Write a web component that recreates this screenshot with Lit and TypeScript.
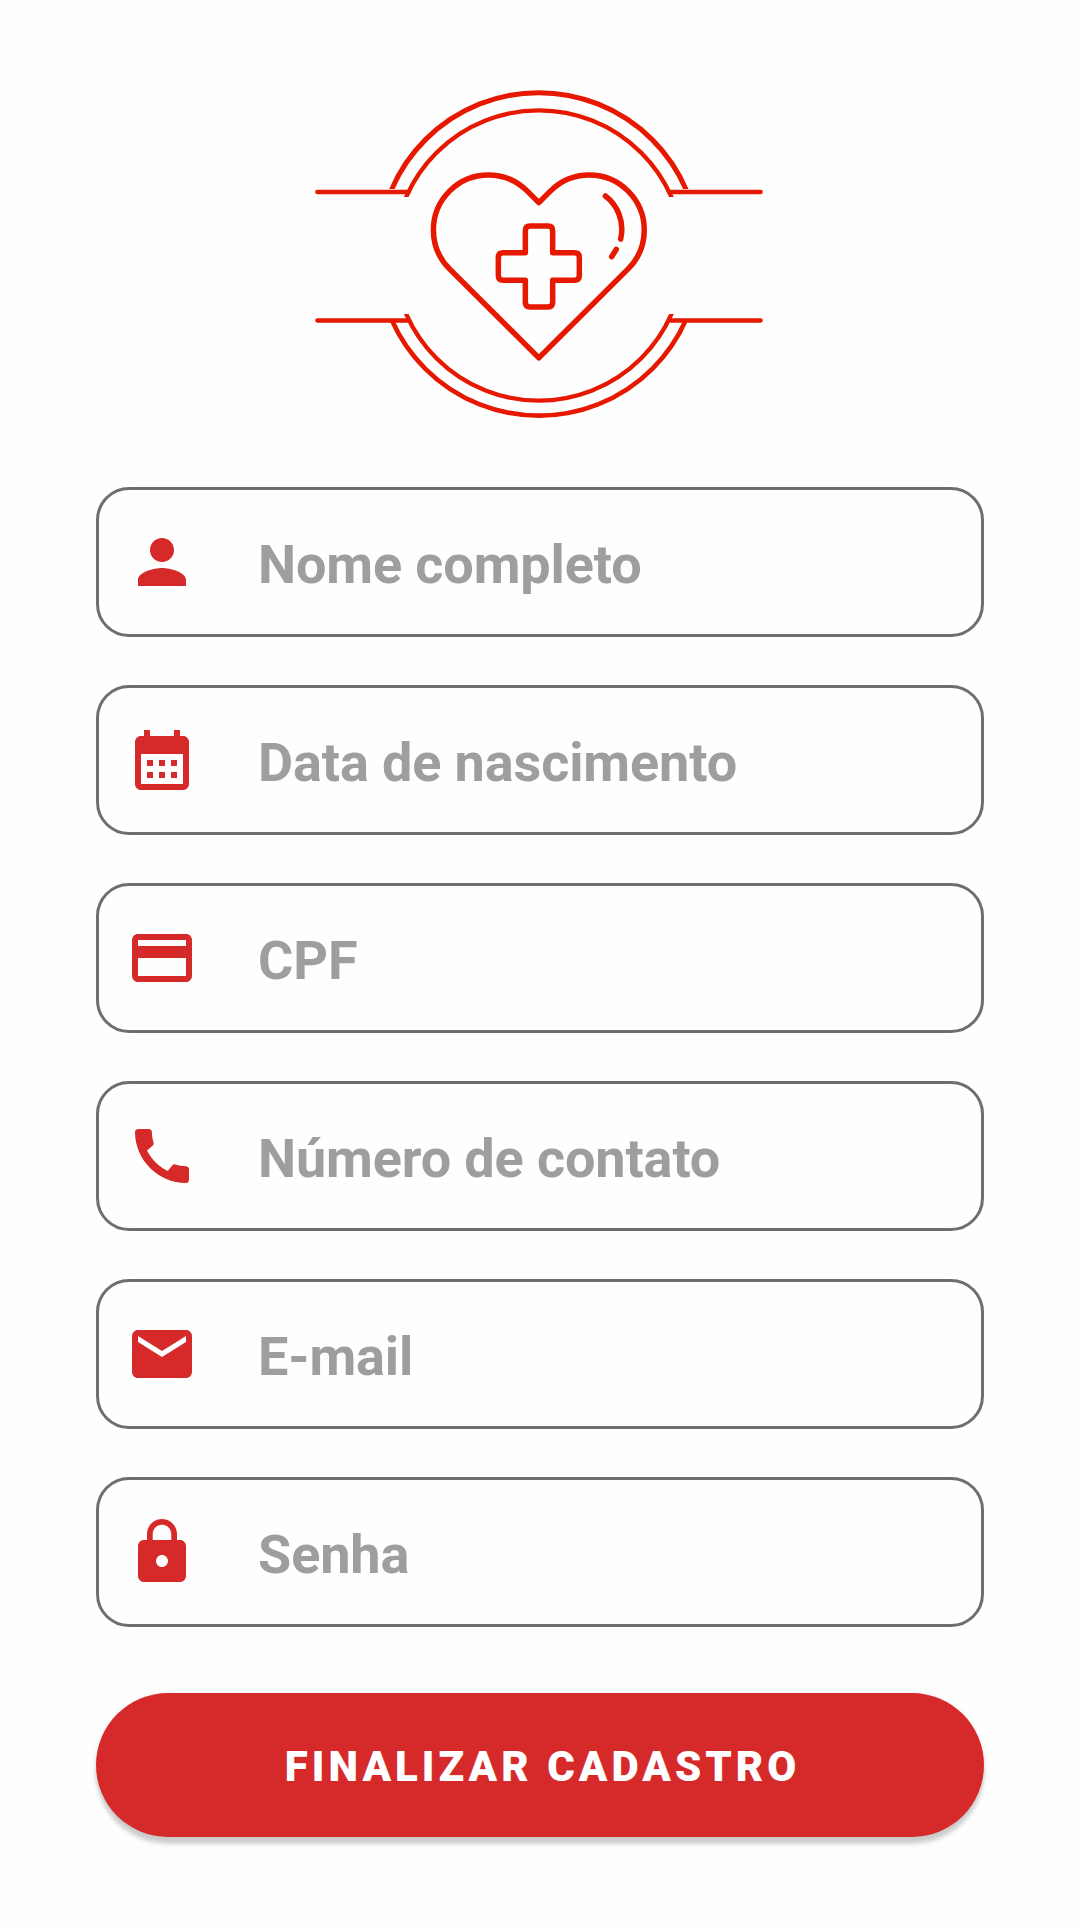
import { LitElement, html, css, svg, SVGTemplateResult } from "lit";
import { customElement, property } from "lit/decorators.js";

const icons: Record<string, SVGTemplateResult> = {
  person: svg`<path d="M12 12c2.21 0 4-1.79 4-4s-1.79-4-4-4-4 1.79-4 4 1.79 4 4 4zm0 2c-2.67 0-8 1.34-8 4v2h16v-2c0-2.66-5.33-4-8-4z"/>`,
  calendar: svg`<path fill-rule="evenodd" d="M19 4h-1V2h-2v2H8V2H6v2H5c-1.11 0-1.99.9-1.99 2L3 20c0 1.1.89 2 2 2h14c1.1 0 2-.9 2-2V6c0-1.1-.9-2-2-2zm0 16H5V10h14v10zM9 14H7v-2h2v2zm4 0h-2v-2h2v2zm4 0h-2v-2h2v2zm-8 4H7v-2h2v2zm4 0h-2v-2h2v2zm4 0h-2v-2h2v2z"/>`,
  card: svg`<path d="M20 4H4c-1.11 0-1.99.89-1.99 2L2 18c0 1.11.89 2 2 2h16c1.11 0 2-.89 2-2V6c0-1.11-.89-2-2-2zm0 14H4v-6h16v6zm0-10H4V6h16v2z"/>`,
  phone: svg`<path d="M20.01 15.38c-1.23 0-2.42-.2-3.53-.56-.35-.12-.74-.03-1.01.24l-1.57 1.97c-2.83-1.35-5.48-3.9-6.89-6.83l1.95-1.66c.27-.28.35-.67.24-1.02-.37-1.11-.56-2.3-.56-3.53 0-.54-.45-.99-.99-.99H4.19C3.65 3 3 3.24 3 3.99 3 13.28 10.73 21 20.01 21c.71 0 .99-.63.99-1.18v-3.45c0-.54-.45-.99-.99-.99z"/>`,
  mail: svg`<path d="M20 4H4c-1.1 0-1.99.9-1.99 2L2 18c0 1.1.9 2 2 2h16c1.1 0 2-.9 2-2V6c0-1.1-.9-2-2-2zm0 4l-8 5-8-5V6l8 5 8-5v2z"/>`,
  lock: svg`<path d="M18 8h-1V6c0-2.76-2.24-5-5-5S7 3.24 7 6v2H6c-1.1 0-2 .9-2 2v10c0 1.1.9 2 2 2h12c1.1 0 2-.9 2-2V10c0-1.1-.9-2-2-2zm-6 9c-1.1 0-2-.9-2-2s.9-2 2-2 2 .9 2 2-.9 2-2 2zm3.1-9H8.9V6c0-1.71 1.39-3.1 3.1-3.1 1.71 0 3.1 1.39 3.1 3.1v2z"/>`,
};

@customElement("brand-logo")
export class BrandLogo extends LitElement {
  static styles = css`
    :host { display: block; }
    .logo { display: block; width: 480px; height: 360px; fill: none; stroke: #e61800; }
  `;

  render() {
    return html`
      <svg class="logo" viewBox="0 0 1440 1080" aria-hidden="true">
        <defs>
          <clipPath id="outer-top"><rect x="0" y="0" width="1440" height="357" /></clipPath>
          <clipPath id="inner-top"><rect x="0" y="0" width="1440" height="381" /></clipPath>
          <clipPath id="outer-bottom"><rect x="0" y="751" width="1440" height="329" /></clipPath>
          <clipPath id="inner-bottom"><rect x="0" y="732" width="1440" height="348" /></clipPath>
        </defs>
        <circle cx="716.5" cy="549" r="481" stroke-width="15" clip-path="url(#outer-top)" />
        <circle cx="716.5" cy="555.5" r="434.5" stroke-width="13" clip-path="url(#inner-top)" />
        <circle cx="716.5" cy="554.5" r="482.5" stroke-width="14" clip-path="url(#outer-bottom)" />
        <circle cx="716.5" cy="557.5" r="434.5" stroke-width="13" clip-path="url(#inner-bottom)" />
        <path stroke-width="13" stroke-linecap="round" d="M52 366H326M1112 366H1382M52 751.500H324M1112 751.500H1382" />
        <g stroke-width="16.5" stroke-linecap="round" stroke-linejoin="round">
          <path d="M716.5 398L682 363.5A165 165 0 1 0 448.500 596.700L716.500 863.500L984.500 596.700A165 165 0 1 0 751 363.500Z" />
          <path d="M690 468H744Q758 468 758 482V548H824Q838 548 838 562V616.500Q838 630.500 824 630.500H758V697Q758 711 744 711H690Q676 711 676 697V630.500H609Q595 630.500 595 616.500V562Q595 548 609 548H676V482Q676 468 690 468Z" />
          <path d="M916 378C953 405 974 456 962 507M949 538L935 560" />
        </g>
      </svg>
    `;
  }
}

@customElement("form-field")
export class FormField extends LitElement {
  @property() icon = "person";
  @property() label = "";

  static styles = css`
    :host { display: block; }
    .field {
      box-sizing: border-box;
      display: flex;
      align-items: center;
      gap: 60px;
      height: 150px;
      padding: 0 27px;
      border: 3px solid #6e6e6e;
      border-radius: 33px;
    }
    .icon { flex: none; width: 72px; height: 72px; fill: #d62a2a; }
    .input {
      flex: 1;
      min-width: 0;
      height: 72px;
      padding: 5px 0 0;
      border: 0;
      outline: 0;
      background: transparent;
      color: #212121;
      font: 700 54px/72px Roboto, "Liberation Sans", sans-serif;
      letter-spacing: -0.12px;
    }
    .input::placeholder { color: #9e9e9e; opacity: 1; }
  `;

  render() {
    return html`
      <label class="field">
        <svg class="icon" viewBox="0 0 24 24" aria-hidden="true">${icons[this.icon]}</svg>
        <input class="input" placeholder=${this.label} aria-label=${this.label} />
      </label>
    `;
  }
}

@customElement("app-root")
export class AppRoot extends LitElement {
  static styles = css`
    :host { display: block; }
    .page {
      box-sizing: border-box;
      display: flex;
      flex-direction: column;
      min-height: 1927px;
      padding: 70px 96px 0;
      background: #fefefe;
    }
    .logo { align-self: center; }
    .fields { display: flex; flex-direction: column; gap: 48px; margin-top: 57px; }
    .submit {
      height: 144px;
      margin-top: 66px;
      padding: 4px 0 0 5px;
      border: 0;
      border-radius: 72px;
      background: #d62a2a;
      box-shadow: 0 7px 4px rgba(0, 0, 0, 0.18), 0 1px 6px rgba(0, 0, 0, 0.06);
      color: #fff;
      font: 900 42px/1 Roboto, "Liberation Sans", sans-serif;
      letter-spacing: 4.05px;
    }
  `;

  private fields = [
    { icon: "person", label: "Nome completo" },
    { icon: "calendar", label: "Data de nascimento" },
    { icon: "card", label: "CPF" },
    { icon: "phone", label: "Número de contato" },
    { icon: "mail", label: "E-mail" },
    { icon: "lock", label: "Senha" },
  ];

  render() {
    return html`
      <main class="page">
        <brand-logo class="logo"></brand-logo>
        <div class="fields">
          ${this.fields.map((f) => html`<form-field icon=${f.icon} label=${f.label}></form-field>`)}
        </div>
        <button class="submit" type="button">FINALIZAR CADASTRO</button>
      </main>
    `;
  }
}
